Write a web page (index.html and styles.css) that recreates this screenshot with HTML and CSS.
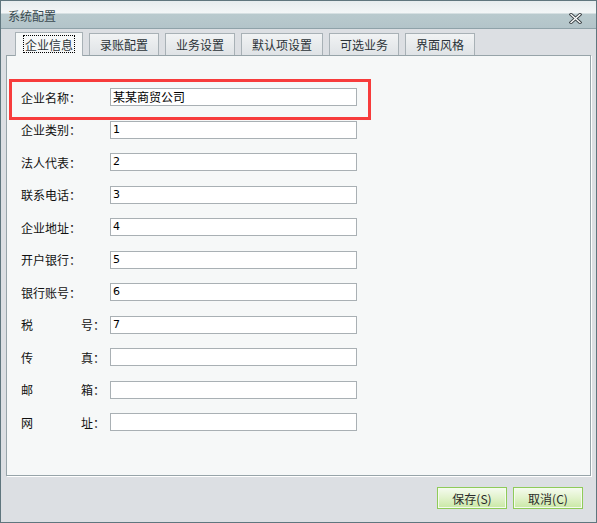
FILE: index.html
```html
<!DOCTYPE html>
<html lang="zh-CN">
<head>
<meta charset="utf-8">
<title>系统配置</title>
<link rel="stylesheet" href="styles.css">
</head>
<body>
<div class="window">
  <div class="titlebar">
    <span class="title">系统配置</span>
    <svg class="close" width="13" height="11" viewBox="0 0 13 11">
      <path d="M2 1.5 L11 9.5 M11 1.5 L2 9.5" stroke="#3c4448" stroke-width="3.2" stroke-linecap="square" fill="none"/>
      <path d="M2 1.5 L11 9.5 M11 1.5 L2 9.5" stroke="#ffffff" stroke-width="1.3" stroke-linecap="square" fill="none"/>
    </svg>
  </div>
  <div class="content">
    <div class="tabs">
      <div class="tab active"><span class="focus">企业信息</span></div>
      <div class="tab">录账配置</div>
      <div class="tab">业务设置</div>
      <div class="tab">默认项设置</div>
      <div class="tab">可选业务</div>
      <div class="tab">界面风格</div>
    </div>
    <div class="panel">
      <div class="highlight"></div>
      <div class="form">
        <div class="row"><span class="label">企业名称：</span><div class="input">某某商贸公司</div></div>
        <div class="row"><span class="label">企业类别：</span><div class="input num">1</div></div>
        <div class="row"><span class="label">法人代表：</span><div class="input num">2</div></div>
        <div class="row"><span class="label">联系电话：</span><div class="input num">3</div></div>
        <div class="row"><span class="label">企业地址：</span><div class="input num">4</div></div>
        <div class="row"><span class="label">开户银行：</span><div class="input num">5</div></div>
        <div class="row"><span class="label">银行账号：</span><div class="input num">6</div></div>
        <div class="row"><span class="label">税　　　　号：</span><div class="input num">7</div></div>
        <div class="row"><span class="label">传　　　　真：</span><div class="input"></div></div>
        <div class="row"><span class="label">邮　　　　箱：</span><div class="input"></div></div>
        <div class="row"><span class="label">网　　　　址：</span><div class="input"></div></div>
      </div>
    </div>
    <div class="footer">
      <button class="btn">保存(S)</button>
      <button class="btn">取消(C)</button>
    </div>
  </div>
</div>
</body>
</html>
```

FILE: styles.css
```css
html, body {
  margin: 0;
  padding: 0;
  background: #ffffff;
}
body {
  font-family: "Noto Sans CJK SC", "Noto Sans", sans-serif;
  font-size: 12px;
  color: #1a1a1a;
}
.window {
  width: 597px;
  height: 523px;
  box-sizing: border-box;
  border: 1px solid #5f767e;
  background: #dcdfe3;
  display: flex;
  flex-direction: column;
}
.titlebar {
  height: 28px;
  box-sizing: border-box;
  border-bottom: 1px solid #8fa2a9;
  background: linear-gradient(to bottom, #e6ecee 0, #f3f6f7 12px, #b9cace 13px, #b3c4c9 100%);
  display: flex;
  align-items: center;
  justify-content: space-between;
  padding: 2px 14px 0 7px;
}
.title {
  color: #3a4a50;
  font-size: 12px;
}
.close {
  display: block;
  margin-top: 5px;
}
.content {
  flex: 1;
  display: flex;
  flex-direction: column;
}
.tabs {
  display: flex;
  align-items: flex-end;
  gap: 6px;
  height: 26px;
  padding-left: 14px;
  position: relative;
  z-index: 1;
}
.tab {
  height: 22px;
  box-sizing: border-box;
  border: 1px solid #a8b1b6;
  border-bottom: none;
  padding: 0 10px;
  display: flex;
  align-items: center;
  justify-content: center;
  background: linear-gradient(to bottom, #f1f3f4, #dfe3e6);
  color: #2b3338;
  white-space: nowrap;
}
.tab.active {
  height: 24px;
  margin-bottom: -1px;
  background: #f6f8f8;
  padding: 0 8px 1px;
}
.focus {
  outline: 1px dotted #000;
  padding: 1px 1px 0;
  line-height: 15px;
}
.panel {
  position: relative;
  margin-left: 5px;
  width: 585px;
  height: 421px;
  box-sizing: border-box;
  border: 1px solid #97a4a9;
  background: #f6f8f8;
  box-shadow: 1px 1px 0 #ffffff;
}
.highlight {
  position: absolute;
  left: 2px;
  top: 23px;
  width: 362px;
  height: 41px;
  box-sizing: border-box;
  border: 3px solid #f73c3c;
}
.form {
  padding: 32px 0 0 14px;
  display: grid;
  grid-auto-rows: 18px;
  row-gap: 14.5px;
}
.row {
  display: flex;
  align-items: center;
}
.label {
  width: 89px;
  white-space: nowrap;
  color: #111;
}
.input {
  width: 247px;
  height: 18px;
  box-sizing: border-box;
  border: 1px solid #a9b0b4;
  background: #ffffff;
  padding: 0 2px;
  line-height: 16px;
  color: #000;
}
.input.num {
  font-family: "DejaVu Sans", sans-serif;
  font-size: 11px;
}
.footer {
  display: flex;
  justify-content: flex-end;
  gap: 6px;
  padding: 11px 13px 0 0;
}
.btn {
  width: 70px;
  height: 22px;
  box-sizing: border-box;
  border: 1px solid #8fcb59;
  box-shadow: inset 0 0 0 1px #f4fbee;
  background: linear-gradient(to bottom, #f5fbef 0, #e1f2cb 50%, #c9e8a5 100%);
  font-family: "Noto Sans CJK SC", "Noto Sans", sans-serif;
  font-size: 12px;
  color: #2a2a2a;
  padding: 0;
  margin: 0;
}
```
